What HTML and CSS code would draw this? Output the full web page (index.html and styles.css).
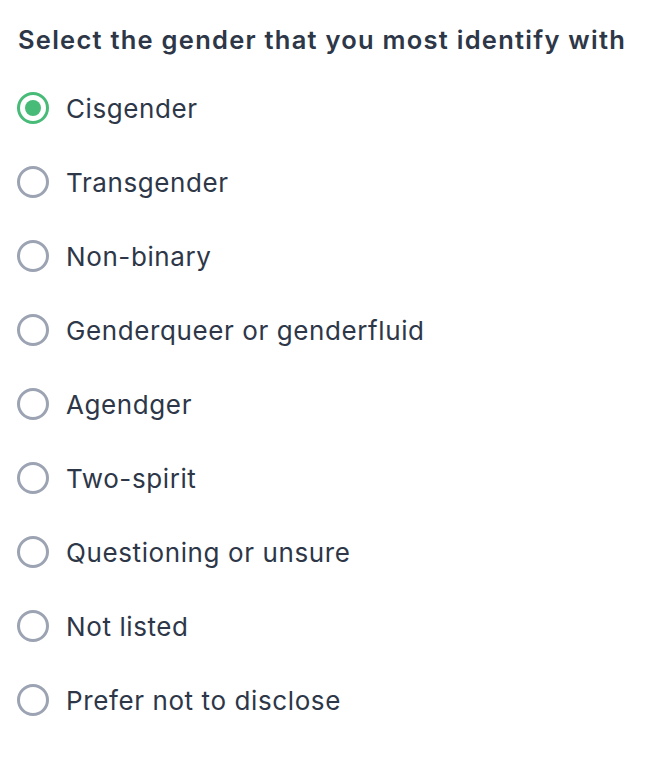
FILE: index.html
```html
<!DOCTYPE html>
<html lang="en">
<head>
<meta charset="utf-8">
<title>Gender</title>
<link rel="stylesheet" href="styles.css">
</head>
<body>
<div class="group" role="radiogroup" aria-labelledby="q">
  <div class="title" id="q">Select the gender that you most identify with</div>
  <div class="options">
    <label class="option"><input type="radio" name="g" checked><span class="radio"></span><span class="label">Cisgender</span></label>
    <label class="option"><input type="radio" name="g"><span class="radio"></span><span class="label">Transgender</span></label>
    <label class="option"><input type="radio" name="g"><span class="radio"></span><span class="label">Non-binary</span></label>
    <label class="option"><input type="radio" name="g"><span class="radio"></span><span class="label">Genderqueer or genderfluid</span></label>
    <label class="option"><input type="radio" name="g"><span class="radio"></span><span class="label">Agendger</span></label>
    <label class="option"><input type="radio" name="g"><span class="radio"></span><span class="label">Two-spirit</span></label>
    <label class="option"><input type="radio" name="g"><span class="radio"></span><span class="label">Questioning or unsure</span></label>
    <label class="option"><input type="radio" name="g"><span class="radio"></span><span class="label">Not listed</span></label>
    <label class="option"><input type="radio" name="g"><span class="radio"></span><span class="label">Prefer not to disclose</span></label>
  </div>
</div>
</body>
</html>
```
FILE: styles.css
```css
html, body {
  margin: 0;
  padding: 0;
  background: #ffffff;
}
body {
  font-family: Inter, "Noto Sans", sans-serif;
  color: #2d3748;
}
.group {
  padding: 24px 17px 0 17px;
}
.title {
  font-size: 25.5px;
  font-weight: 600;
  line-height: 32px;
  letter-spacing: 1.25px;
  color: #2d3748;
  margin: 0 0 32px 1px;
  white-space: nowrap;
}
.options {
  display: flex;
  flex-direction: column;
  gap: 34px;
}
.option {
  display: flex;
  align-items: center;
  gap: 17px;
  height: 40px;
  cursor: pointer;
}
.option input {
  position: absolute;
  opacity: 0;
  width: 0;
  height: 0;
}
.radio {
  box-sizing: border-box;
  width: 32px;
  height: 32px;
  border-radius: 50%;
  border: 3px solid #9ca3b2;
  display: flex;
  align-items: center;
  justify-content: center;
  flex: none;
}
.option input:checked + .radio {
  border: 3px solid #48bb78;
}
.option input:checked + .radio::after {
  content: "";
  width: 16px;
  height: 16px;
  border-radius: 50%;
  background: #48bb78;
}
.label {
  font-size: 26px;
  font-weight: 400;
  letter-spacing: 0.6px;
  color: #2d3748;
}
```
